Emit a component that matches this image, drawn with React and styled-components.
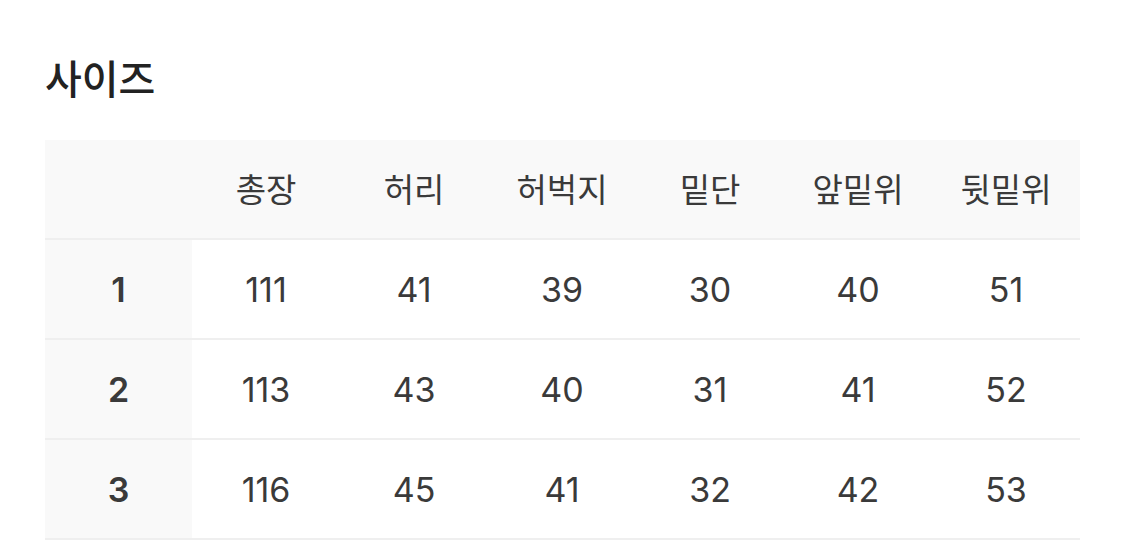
import styled, {createGlobalStyle} from 'styled-components';

const GlobalStyle = createGlobalStyle`
  body {
    margin: 0;
    background: #fff;
    font-family: Inter, "Noto Sans CJK KR", sans-serif;
  }
`;

const Page = styled.div`
  padding: 52px 45px 0 45px;
`;

const Title = styled.h2`
  margin: 0 0 38px 0;
  font-size: 40px;
  line-height: 50px;
  font-weight: 500;
  color: #222;
  font-family: "Noto Sans CJK KR", sans-serif;
`;

const Table = styled.div`
  display: grid;
  grid-template-columns: 147px repeat(6, 148px);
  width: 1035px;
`;

const Cell = styled.div`
  height: 100px;
  box-sizing: border-box;
  border-bottom: 2px solid #efefef;
  display: flex;
  align-items: center;
  justify-content: center;
  font-size: 34px;
  color: #3a3a3a;
  background: ${props => (props.$shade ? '#f9f9f9' : '#fff')};
  font-weight: ${props => (props.$bold ? 600 : 400)};
`;

const HeadCell = styled(Cell)`
  background: #f9f9f9;
  font-family: "Noto Sans CJK KR", sans-serif;
  font-weight: 400;
  font-size: 33px;
  padding-bottom: 2px;
`;

const columns = ['총장', '허리', '허벅지', '밑단', '앞밑위', '뒷밑위'];

const rows = [
  {size: '1', values: [111, 41, 39, 30, 40, 51]},
  {size: '2', values: [113, 43, 40, 31, 41, 52]},
  {size: '3', values: [116, 45, 41, 32, 42, 53]},
];

const App = () => {
  return (
    <Page>
      <GlobalStyle/>
      <Title>사이즈</Title>
      <Table>
        <HeadCell/>
        {columns.map(c => <HeadCell key={c}>{c}</HeadCell>)}
        {rows.map(r => (
          <>
            <Cell key={r.size} $shade $bold>{r.size}</Cell>
            {r.values.map((v, i) => <Cell key={r.size + '-' + i}>{v}</Cell>)}
          </>
        ))}
      </Table>
    </Page>
  );
};

export default App;
